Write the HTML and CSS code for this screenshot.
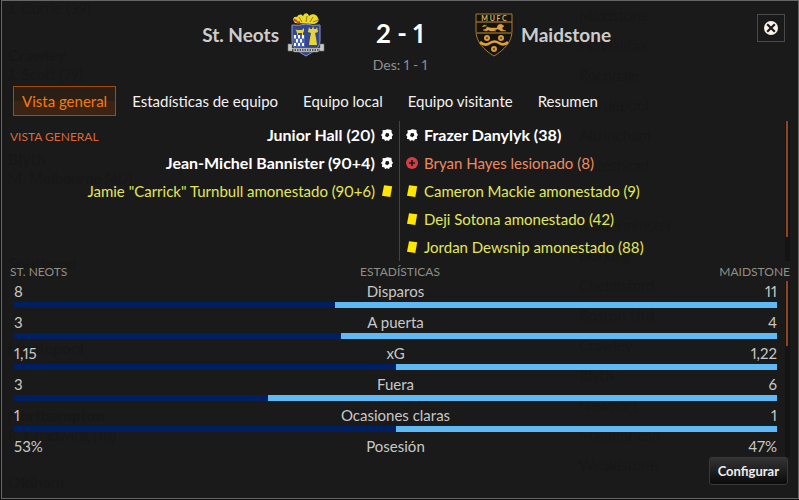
FILE: index.html
```
<!DOCTYPE html>
<html lang="es">
<head>
	<meta charset="utf-8">
	<title>St. Neots 2 - 1 Maidstone</title>
	<link rel="stylesheet" href="styles.css">
</head>
<body>

	<!-- shared icons -->
	<svg class="defs" aria-hidden="true">
		<symbol id="ball" viewBox="0 0 12 12">
			<path d="M1.500 1.200 4.500 1 6 .2 8 .6 10.500 1 10.600 3.500 12 6 10.800 7.500 11 10 8.800 10.200 8 12 6 11.200 4 12 3.200 10.200 1 10 1.200 7.500 0 6 1.700 4z" fill="#fff"/>
			<path d="M5 3.900 7.800 4.200 8.300 6.600 6.400 8.200 4 7.100z" fill="#1a1a1a"/>
		</symbol>
		<symbol id="card" viewBox="0 0 12 12">
			<path d="M3 .2 11.200 1.300 9.300 12 1 10.800z" fill="#ffe600"/>
		</symbol>
		<symbol id="injury" viewBox="0 0 12 12">
			<circle cx="6" cy="6" r="6" fill="#d23f44"/>
			<path d="M6 3v6M3 6h6" stroke="#1a1a1a" stroke-width="1.6"/>
		</symbol>
	</svg>

	<main class="panel">
		<div class="ghost" aria-hidden="true">
			<span style="left:6px;top:0">J. Currie (39)</span>
			<b style="left:6px;top:47px">Crawley</b>
			<span style="left:6px;top:66px">J. Scott (79)</span>
			<b style="left:6px;top:151px">Blyth</b>
			<span style="left:6px;top:170px">M. Melbourne (40)</span>
			<b style="left:6px;top:255px">Southend</b>
			<b style="left:6px;top:340px">Hartlepool</b>
			<b style="left:6px;top:407px">Northampton</b>
			<span style="left:6px;top:427px">R. Chadwick (18)</span>
			<b style="left:6px;top:474px">Oldham</b>
			<span style="left:577px;top:7px">Maidstone</span>
			<span style="left:577px;top:37px">FC Halifax</span>
			<span style="left:577px;top:67px">Rochdale</span>
			<span style="left:577px;top:97px">Hartlepool</span>
			<span style="left:577px;top:127px">Altrincham</span>
			<span style="left:577px;top:157px">Gateshead</span>
			<span style="left:577px;top:217px">Kidderminster</span>
			<span style="left:577px;top:247px">Dorking</span>
			<span style="left:577px;top:277px">Chelmsford</span>
			<span style="left:577px;top:307px">Boston Utd</span>
			<span style="left:577px;top:337px">Crawley</span>
			<span style="left:577px;top:367px">Blyth</span>
			<span style="left:577px;top:397px">Newport</span>
			<span style="left:577px;top:427px">Maidenhead</span>
			<span style="left:577px;top:457px">Wealdstone</span>
		</div>

		<button class="close" aria-label="Cerrar">
			<svg width="14" height="14" viewBox="0 0 14 14">
				<circle cx="7" cy="7" r="7" fill="#fbf3ec"/>
				<path d="M3.2 3.200l7.600 7.600M10.800 3.200l-7.600 7.600" stroke="#1a1a1a" stroke-width="2.200"/>
			</svg>
		</button>

		<header class="match">
			<div class="team home">
				<h2>St. Neots</h2>
				<svg class="crest" width="38" height="44" viewBox="0 0 38 44" aria-hidden="true">
					<path d="M8 10C5 7 6 3 10 4c2-3 4-3 6-1 2-4 5-3 6 0 3-3 8-2 9 2 2 3-1 5-4 6z" fill="#e8d92c"/>
					<path d="M7 6l4 3M12 4l3 5M20 3l-1 6M26 4l-3 5M31 7l-5 2" stroke="#9c7a18"/>
					<path d="M7 7l3 1M10 10l3-1" stroke="#c8452c" stroke-width="2"/>
					<path d="M5 12q7 1 14-1 7 2 14 1v16c0 7-7 11-14 15C12 39 5 35 5 28z" fill="#35468f" stroke="#8f98c4"/>
					<path d="M8 16l2 1h5l2-2v3l-1 2v3h-1v-3h-4v3h-1v-3l-1-3z" fill="#e5d53a"/>
					<path d="M26 13l1 3h2l1-2 1 5-3 1 1 5 1 7h-8l1-7 1-5-3-1 1-5 1 2h2z" fill="#e5d53a"/>
					<path d="M6 22h12v12H9q-3-3-3-6z" fill="#4a60b0"/>
					<path d="M7 22h2v3l-1 1-1-1zM11 22h2v3l-1 1-1-1zM15 22h2v3l-1 1-1-1zM9 26h2v3l-1 1-1-1zM13 26h2v3l-1 1-1-1zM7 30h2v3H7zM11 30h2v3h-2zM15 30h2v3h-2z" fill="#fff"/>
					<path d="M1 31h4v4h28v-4h4v7h-5l-1 1H7l-1-1H1z" fill="#c9c9c6" stroke="#777" stroke-width=".6"/>
					<path d="M5 37h28" stroke="#555" stroke-width="2" stroke-dasharray="1.5 1"/>
				</svg>
			</div>
			<div class="result">
				<strong class="score">2 - 1</strong>
				<span class="half">Des: 1 - 1</span>
			</div>
			<div class="team away">
				<svg class="crest" width="38" height="44" viewBox="0 0 38 44" aria-hidden="true">
					<path d="M1 1h36v17c0 11-8 19-18 25C9 37 1 29 1 18z" fill="#15130f" stroke="#a87a2c"/>
					<path d="M1 9h36M2 20h34" stroke="#c48d31"/>
					<text x="19" y="7.5" text-anchor="middle" class="crest-text">M U F C</text>
					<path d="M8 17l3-1 1-2 4 1h6l1-3 3-1 3 2-2 2 1 2 3 1h-5l-3-2-4 1 2 1h-6l-1-1-3 1zM7 14l2-2 3 1" fill="#d9a045" stroke="#d9a045" stroke-width=".4"/>
					<circle cx="12" cy="25" r="3" fill="#d79a38"/><circle cx="26" cy="25" r="3" fill="#d79a38"/><circle cx="19" cy="36" r="3" fill="#d79a38"/>
					<circle cx="12" cy="25" r="1" fill="#5a3c10"/><circle cx="26" cy="25" r="1" fill="#5a3c10"/><circle cx="19" cy="36" r="1" fill="#5a3c10"/>
					<path d="M5 29c4 4 7 3 10 1s6-2 9 0 6 2 9-1" fill="none" stroke="#e0a03a" stroke-width="2.600"/>
				</svg>
				<h2>Maidstone</h2>
			</div>
		</header>

		<nav class="tabs">
			<button class="tab active">Vista general</button>
			<button class="tab">Estadísticas de equipo</button>
			<button class="tab">Equipo local</button>
			<button class="tab">Equipo visitante</button>
			<button class="tab">Resumen</button>
		</nav>

		<section class="scroller events">
			<h3>Vista general</h3>
			<ul class="home-events">
				<li class="goal">Junior Hall (20)<svg><use href="#ball"/></svg></li>
				<li class="goal">Jean-Michel Bannister (90+4)<svg><use href="#ball"/></svg></li>
				<li class="booked">Jamie "Carrick" Turnbull amonestado (90+6)<svg><use href="#card"/></svg></li>
			</ul>
			<ul class="away-events">
				<li class="goal"><svg><use href="#ball"/></svg>Frazer Danylyk (38)</li>
				<li class="injured"><svg><use href="#injury"/></svg>Bryan Hayes lesionado (8)</li>
				<li class="booked"><svg><use href="#card"/></svg>Cameron Mackie amonestado (9)</li>
				<li class="booked"><svg><use href="#card"/></svg>Deji Sotona amonestado (42)</li>
				<li class="booked"><svg><use href="#card"/></svg>Jordan Dewsnip amonestado (88)</li>
			</ul>
			<div class="track"><div class="thumb" style="height:83%"></div></div>
		</section>

		<div class="stats-head">
			<span>St. Neots</span>
			<span>Estadísticas</span>
			<span>Maidstone</span>
		</div>

		<section class="scroller stats">
			<div class="stat-list">
				<div class="stat"><span>8</span><span>Disparos</span><span>11</span>
					<div class="bar"><div style="width:42.1%"></div></div></div>
				<div class="stat"><span>3</span><span>A puerta</span><span>4</span>
					<div class="bar"><div style="width:42.9%"></div></div></div>
				<div class="stat"><span>1,15</span><span>xG</span><span>1,22</span>
					<div class="bar"><div style="width:50%"></div></div></div>
				<div class="stat"><span>3</span><span>Fuera</span><span>6</span>
					<div class="bar"><div style="width:33.3%"></div></div></div>
				<div class="stat"><span>1</span><span>Ocasiones claras</span><span>1</span>
					<div class="bar"><div style="width:50%"></div></div></div>
				<div class="stat"><span>53%</span><span>Posesión</span><span>47%</span></div>
			</div>
			<div class="track"><div class="thumb" style="height:37%"></div></div>
		</section>

		<footer class="actions">
			<button class="config">Configurar</button>
		</footer>
	</main>

</body>
</html>
```
FILE: styles.css
```
* {
	box-sizing: border-box;
}
body {
	margin: 0;
	padding: 0 0 2px 1px;
	background-color: #0f0f0f;
	color: #c8c8c8;
	font-family: Lato, "Open Sans", sans-serif;
	font-size: 15px;
	font-variant-numeric: proportional-nums;
}
h2, h3, ul {
	margin: 0;
	padding: 0;
}
button {
	font: inherit;
	color: inherit;
	cursor: pointer;
}
.defs {
	display: none;
}
.panel {
	position: relative;
	min-height: calc(100vh - 2px);
	border: 1px solid #666;
	background-color: #1a1a1a;
	overflow: hidden;
}

/* league table showing through the panel */
.ghost span, .ghost b {
	position: absolute;
	line-height: 14px;
	color: #171717;
	white-space: nowrap;
}
.ghost b {
	font-size: 16px;
}

.close {
	position: absolute;
	top: 13px;
	right: 13px;
	z-index: 1;
	width: 28px;
	height: 28px;
	display: flex;
	align-items: center;
	justify-content: center;
	padding: 0;
	background: none;
	border: 1px solid #4a4a4a;
}

/* header */
.match {
	position: relative;
	display: grid;
	grid-template-columns: 1fr 150px 1fr;
	align-items: start;
	padding-top: 12px;
}
.team {
	display: flex;
	align-items: center;
	gap: 8px;
	height: 44px;
}
.home {
	justify-content: flex-end;
}
.team h2 {
	font-size: 19px;
	line-height: 24px;
	color: #ccc;
}
.crest-text {
	font-size: 7px;
	font-weight: bold;
	fill: #d8b06a;
}
.result {
	display: flex;
	flex-direction: column;
	align-items: center;
}
.score {
	font-size: 26px;
	line-height: 40px;
	color: #fff;
}
.half {
	font-size: 14px;
	line-height: 24px;
	color: #8f8f8f;
}

/* tabs */
.tabs {
	position: relative;
	display: flex;
	gap: 7px;
	padding: 9px 11px 5px;
}
.tab {
	height: 30px;
	padding: 0 8px 1px;
	border: 1px solid transparent;
	background: none;
	color: #f2f2f2;
	white-space: nowrap;
}
.tab.active {
	border-color: #a04c0c;
	background: linear-gradient(#2a1e15 50%, #3b2414 50%);
	color: #f47a10;
}

/* events */
.scroller {
	position: relative;
	display: grid;
	padding: 0 8px;
}
.track {
	width: 5px;
	background-color: #141414;
}
.thumb {
	width: 2px;
	margin-left: 1px;
	background-color: #8c4527;
}
.events {
	grid-template-columns: calc(50% - 1px) 1fr 5px;
}
.events h3 {
	grid-area: 1 / 1;
	font-size: 12px;
	font-weight: normal;
	line-height: 32px;
	text-transform: uppercase;
	color: #d9683a;
}
.home-events {
	grid-area: 1 / 1;
}
.away-events {
	border-left: 1px solid #444;
}
.events li {
	display: flex;
	align-items: center;
	gap: 6px;
	height: 28px;
	padding: 0 6px;
	white-space: nowrap;
}
.home-events li {
	justify-content: flex-end;
}
.events svg {
	width: 12px;
	height: 12px;
}
.events .goal {
	font-size: 16px;
	line-height: 18px;
	font-weight: bold;
	color: #fff;
}
.booked {
	color: #e3e65a;
}
.injured {
	color: #ee8a62;
}

/* stats */
.stats-head {
	position: relative;
	display: grid;
	grid-template-columns: 1fr auto 1fr;
	padding: 2px 8px 0;
	font-size: 12px;
	line-height: 18px;
	text-transform: uppercase;
	color: #8f8f88;
}
.stats-head span:last-child {
	text-align: right;
}
.stats {
	grid-template-columns: 1fr 5px;
}
.stat-list {
	padding: 0 8px 0 4px;
}
.stat {
	display: grid;
	grid-template-columns: 1fr auto 1fr;
	line-height: 21px;
}
.stat span:nth-child(3) {
	text-align: right;
}
.bar {
	grid-column: 1 / 4;
	height: 6px;
	margin-bottom: 4px;
	background-color: #5fb9f5;
}
.bar div {
	height: 100%;
	background-color: #001f60;
}

.actions {
	position: relative;
	display: flex;
	justify-content: flex-end;
	padding: 0 10px 13px;
}
.config {
	height: 28px;
	padding: 0 8px;
	border: 1px solid #383838;
	border-radius: 3px;
	background: linear-gradient(#333, #0a0a0a);
	font-size: 13px;
	font-weight: bold;
	color: #eee;
}
```
